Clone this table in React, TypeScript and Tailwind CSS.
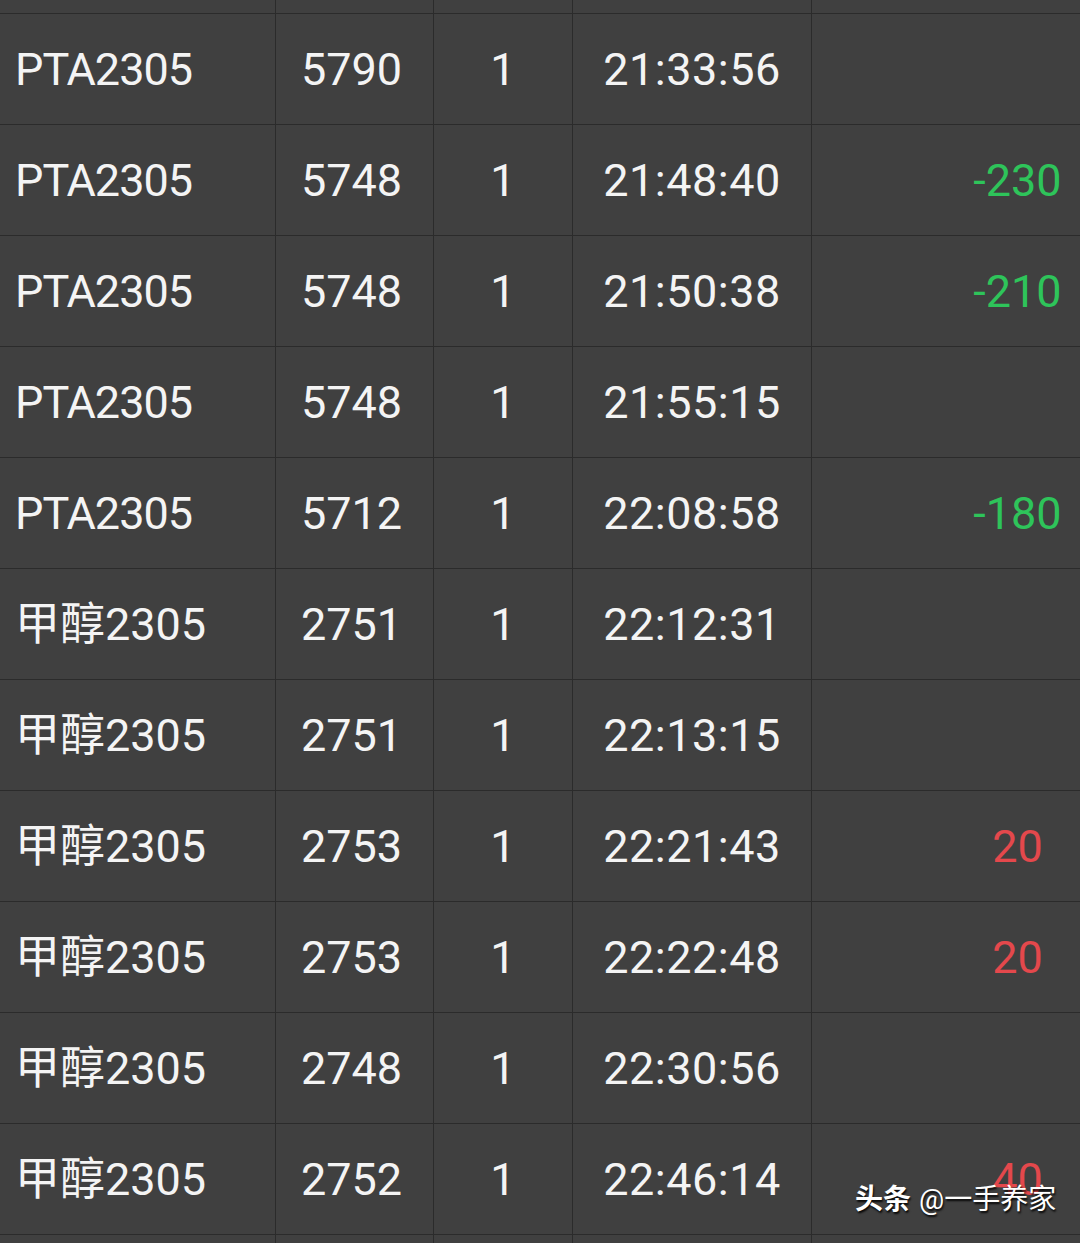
const rows = [
  { name: 'PTA2305', price: '5790', qty: '1', time: '21:33:56', pnl: '' },
  { name: 'PTA2305', price: '5748', qty: '1', time: '21:48:40', pnl: '-230' },
  { name: 'PTA2305', price: '5748', qty: '1', time: '21:50:38', pnl: '-210' },
  { name: 'PTA2305', price: '5748', qty: '1', time: '21:55:15', pnl: '' },
  { name: 'PTA2305', price: '5712', qty: '1', time: '22:08:58', pnl: '-180' },
  { name: '甲醇2305', price: '2751', qty: '1', time: '22:12:31', pnl: '' },
  { name: '甲醇2305', price: '2751', qty: '1', time: '22:13:15', pnl: '' },
  { name: '甲醇2305', price: '2753', qty: '1', time: '22:21:43', pnl: '20' },
  { name: '甲醇2305', price: '2753', qty: '1', time: '22:22:48', pnl: '20' },
  { name: '甲醇2305', price: '2748', qty: '1', time: '22:30:56', pnl: '' },
  { name: '甲醇2305', price: '2752', qty: '1', time: '22:46:14', pnl: '40' },
];

const grid = 'grid grid-cols-[276px_158px_139px_239px_412px] border-b border-[#2b2b2b]';
const cell = 'border-r border-[#2b2b2b] flex items-center';

function PartialRow({ h }: { h: string }) {
  return (
    <div className={`${grid} ${h}`}>
      <div className={cell} />
      <div className={cell} />
      <div className={cell} />
      <div className={cell} />
      <div className={cell} />
    </div>
  );
}

export default function App() {
  return (
    <div
      className="relative w-[1080px] h-[1243px] overflow-hidden bg-[#404040] text-[#f4f4f4]"
      style={{ fontFamily: 'Roboto, "Noto Sans CJK SC", sans-serif' }}
    >
      <div className="w-[1224px]">
        <PartialRow h="h-[14px]" />
        {rows.map((r, i) => {
          const neg = r.pnl.startsWith('-');
          const latin = r.name.startsWith('PTA');
          return (
            <div key={i} className={`${grid} h-[111px] text-[45px] leading-none`}>
              <div className={`${cell} pl-[15px] ${latin ? 'tracking-[-1px]' : ''}`}>{r.name}</div>
              <div className={`${cell} justify-center pr-[6px]`}>{r.price}</div>
              <div className={`${cell} justify-center`}>{r.qty}</div>
              <div className={`${cell} justify-center tracking-[0.5px]`}>{r.time}</div>
              <div
                className={`${cell} justify-center ${neg ? 'text-[#2ec45a]' : 'text-[#e4484c]'}`}
              >
                {r.pnl}
              </div>
            </div>
          );
        })}
        <PartialRow h="h-[20px]" />
      </div>

      <div className="absolute left-[855px] top-[1186px] flex items-center gap-[8px] text-[28px] leading-none text-white [text-shadow:1px_2px_2px_rgba(0,0,0,0.9)]">
        <span className="font-bold">头条</span>
        <span>@一手养家</span>
      </div>
    </div>
  );
}
